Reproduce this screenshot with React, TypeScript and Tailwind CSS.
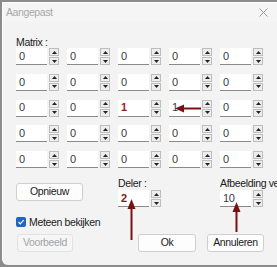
import React from "react";

const rows = [
  ["0", "0", "0", "0", "0"],
  ["0", "0", "0", "0", "0"],
  ["0", "0", "1", "1", "0"],
  ["0", "0", "0", "0", "0"],
  ["0", "0", "0", "0", "0"],
];

function Spinner() {
  return (
    <div className="flex w-[10px] flex-col gap-[1px]">
      <div className="flex h-[8px] items-center justify-center border border-[#bdbdbd] bg-[#ededed]">
        <svg width="5" height="3" viewBox="0 0 5 3">
          <path d="M0 3 L2.5 0 L5 3 Z" fill="#222" />
        </svg>
      </div>
      <div className="flex h-[8px] items-center justify-center border border-[#bdbdbd] bg-[#ededed]">
        <svg width="5" height="3" viewBox="0 0 5 3">
          <path d="M0 0 L5 0 L2.5 3 Z" fill="#222" />
        </svg>
      </div>
    </div>
  );
}

function SpinBox({ value, red }: { value: string; red?: "bold" | "plain" }) {
  const tone =
    red === "bold"
      ? "font-bold text-[#8a1717]"
      : red === "plain"
        ? "font-semibold text-[#9a1c1c]"
        : "text-[#3a3a3a]";
  return (
    <div className="flex h-[17px] w-[43px] items-stretch gap-[2px]">
      <div className={"flex w-[31px] items-center border-b border-[#8a8a8a] bg-white pl-[3px] text-[11px] " + tone}>
        {value}
      </div>
      <Spinner />
    </div>
  );
}

function Button({ label, width, disabled }: { label: string; width: string; disabled?: boolean }) {
  return (
    <div
      className={
        "flex h-[18px] items-center justify-center rounded-[3px] border text-[10.5px] " +
        width +
        (disabled
          ? " border-[#e2e2e2] bg-[#f6f6f6] text-[#a3a3a3]"
          : " border-[#cfcfcf] bg-[#fdfdfd] text-[#1b1b1b]")
      }
    >
      {label}
    </div>
  );
}

export default function App() {
  return (
    <div
      className="relative h-[267px] w-[277px] overflow-hidden bg-[#8c8c8c] tracking-[-0.35px]"
      style={{ fontFamily: '"Liberation Sans", Arial, sans-serif' }}
    >
      <div className="ml-[2px] mt-[2px] h-[263px] w-[280px] rounded-b-[6px] border-l border-t border-white bg-[#f3f3f3]">
        <div className="flex h-[19px] items-center justify-between bg-[#f5f5f5] pl-[3px] pr-[10px]">
          <span className="text-[10.5px] tracking-[-0.4px] text-[#a8a8a8]">Aangepast</span>
          <svg width="9" height="9" viewBox="0 0 9 9" className="mr-[4px]">
            <path d="M0.5 0.5 L8.5 8.5 M8.5 0.5 L0.5 8.5" stroke="#9a9a9a" strokeWidth="1" />
          </svg>
        </div>
        <div className="pl-[13px] pt-[14px]">
          <div className="h-[12px] text-[10.5px] leading-[12px] text-[#1b1b1b]">Matrix :</div>
          <div className="grid w-[247px] grid-cols-[repeat(5,43px)] gap-x-[8px] gap-y-[8.75px]">
            {rows.map((r, i) =>
              r.map((v, j) => (
                <SpinBox key={i + "-" + j} value={v} red={i === 2 && j === 2 ? "plain" : undefined} />
              ))
            )}
          </div>
          <div className="mt-[9px] flex h-[48px]">
            <div className="flex w-[102px] flex-col pt-[6px]">
              <Button label="Opnieuw" width="w-[67px]" />
              <div className="mt-[15px] flex items-center gap-[3px]">
                <div className="flex h-[10px] w-[10px] items-center justify-center rounded-[2px] bg-[#1f65c4]">
                  <svg width="8" height="8" viewBox="0 0 8 8">
                    <path d="M1.5 4 L3.3 5.8 L6.6 2.2" stroke="white" strokeWidth="1.2" fill="none" />
                  </svg>
                </div>
                <span className="text-[10.5px] leading-[12px] text-[#1b1b1b]">Meteen bekijken</span>
              </div>
            </div>
            <div className="flex w-[102px] flex-col">
              <div className="h-[12px] text-[10.5px] leading-[12px] text-[#1b1b1b]">Deler :</div>
              <div className="mt-[1px]">
                <SpinBox value="2" red="bold" />
              </div>
            </div>
            <div className="flex w-[60px] flex-col">
              <div className="h-[12px] whitespace-nowrap text-[10.5px] leading-[12px] text-[#1b1b1b]">
                Afbeelding ve
              </div>
              <div className="mt-[1px]">
                <SpinBox value="10" />
              </div>
            </div>
          </div>
          <div className="mt-[9px] flex">
            <div className="ml-[1px] w-[121px]">
              <Button label="Voorbeeld" width="w-[56px]" disabled />
            </div>
            <Button label="Ok" width="w-[58px]" />
            <div className="ml-[11px]">
              <Button label="Annuleren" width="w-[57px]" />
            </div>
          </div>
        </div>
      </div>
      <svg className="pointer-events-none absolute left-0 top-0" width="277" height="267">
        <path d="M201 108.5 L182 108.5" stroke="#7a1013" strokeWidth="2" />
        <path d="M175 108.5 L184 104.5 L184 112.5 Z" fill="#7a1013" />
        <path d="M131.5 240 L131.5 207" stroke="#7a1013" strokeWidth="2" />
        <path d="M131.5 199 L127.5 209 L135.5 209 Z" fill="#7a1013" />
        <path d="M236.5 232 L236.5 210" stroke="#7a1013" strokeWidth="2" />
        <path d="M236.5 202 L232.5 212 L240.5 212 Z" fill="#7a1013" />
      </svg>
    </div>
  );
}
